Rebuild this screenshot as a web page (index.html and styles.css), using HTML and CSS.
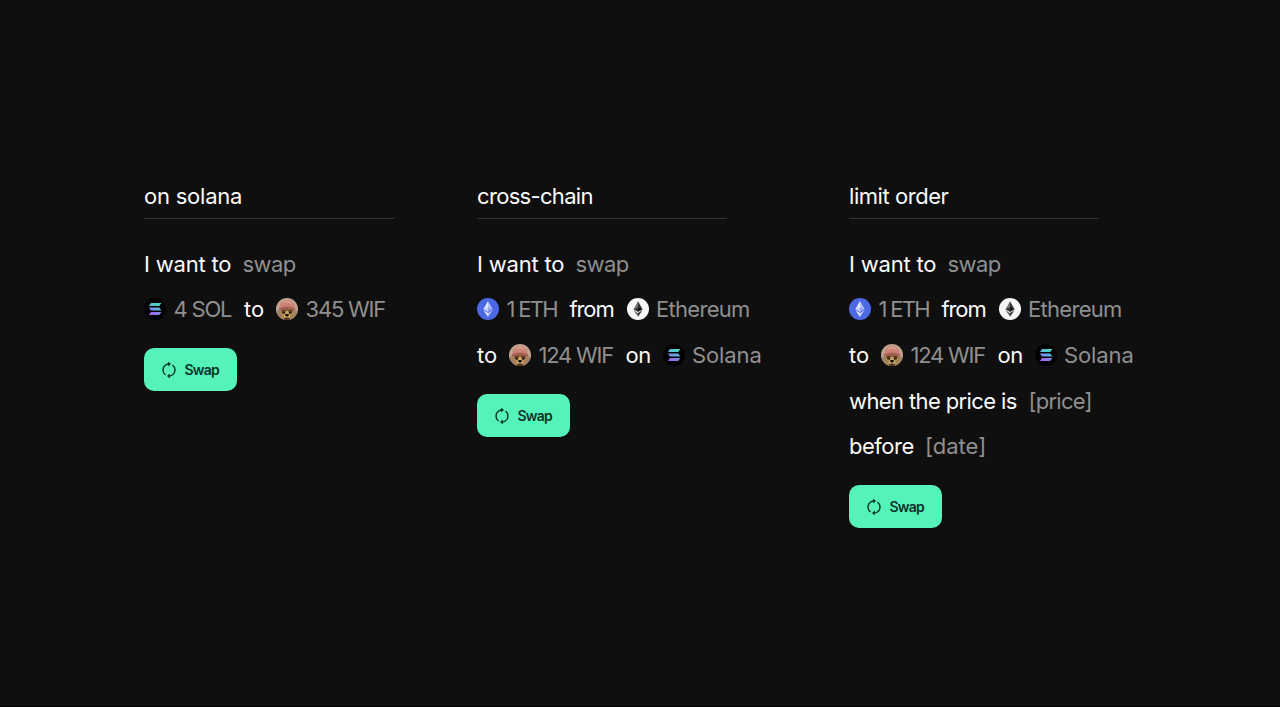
FILE: index.html
```
<!DOCTYPE html>
<html lang="en">
<head>
<meta charset="utf-8">
<title>Swap</title>
<link rel="stylesheet" href="styles.css">
</head>
<body>
<svg class="defs" aria-hidden="true">
  <defs>
    <linearGradient id="solTop"><stop offset="0" stop-color="#65b5dd"/><stop offset="1" stop-color="#40dfba"/></linearGradient>
    <linearGradient id="solMid"><stop offset="0" stop-color="#8583ea"/><stop offset="1" stop-color="#57bbd5"/></linearGradient>
    <linearGradient id="solLow"><stop offset="0" stop-color="#a55cf0"/><stop offset="1" stop-color="#7d8de8"/></linearGradient>
    <clipPath id="round"><circle cx="11" cy="11" r="11"/></clipPath>
  </defs>
  <symbol id="sol" viewBox="0 0 22 22">
    <circle cx="11" cy="11" r="11" fill="#020204"/>
    <path d="M7 5H17.4L15.2 8H4.8Z" fill="url(#solTop)"/>
    <path d="M4.8 9.5H15.2L17.4 12.5H7Z" fill="url(#solMid)"/>
    <path d="M7 14H17.4L15.2 17H4.8Z" fill="url(#solLow)"/>
  </symbol>
  <symbol id="eth" viewBox="0 0 22 22">
    <circle cx="11" cy="11" r="11" fill="#4d68e4"/>
    <path d="M11 3L6.4 11.2L11 13.8Z" fill="#e3e8ff"/>
    <path d="M11 3L15.6 11.2L11 13.8Z" fill="#b9c5fa"/>
    <path d="M11 9.2L6.4 11.2L11 13.8Z" fill="#c3ccfb"/>
    <path d="M11 9.2L15.6 11.2L11 13.8Z" fill="#8fa1f1"/>
    <path d="M6.4 12.3L11 15L11 19Z" fill="#e3e8ff"/>
    <path d="M15.6 12.3L11 15L11 19Z" fill="#b9c5fa"/>
  </symbol>
  <symbol id="ethereum" viewBox="0 0 22 22">
    <circle cx="11" cy="11" r="11" fill="#f7f7f7"/>
    <path d="M11 3.2L6.5 11.2L11 13.8Z" fill="#737373"/>
    <path d="M11 3.2L15.5 11.2L11 13.8Z" fill="#343434"/>
    <path d="M11 9.2L6.5 11.2L11 13.8Z" fill="#393939"/>
    <path d="M11 9.2L15.5 11.2L11 13.8Z" fill="#171717"/>
    <path d="M6.5 12.3L11 15L11 18.8Z" fill="#737373"/>
    <path d="M15.5 12.3L11 15L11 18.8Z" fill="#343434"/>
  </symbol>
  <symbol id="wif" viewBox="0 0 22 22">
    <g clip-path="url(#round)">
      <path d="M0 0H22V22H0Z" fill="#bfa28e"/>
      <path d="M0 13H5L6 22H0ZM17 13H22V22H16Z" fill="#a08068"/>
      <path d="M5 11H17L18 16L15.5 22H6.5L4 16Z" fill="#a98350"/>
      <path d="M3.5 11C3.5 5.5 6.4 2.2 11 2.2S18.8 5.5 18.8 11Q11 8.5 3.5 11Z" fill="#cb8176"/>
      <path d="M7 5Q11 2 15 5.2" stroke="#dda293" stroke-width="1.5" fill="none"/>
      <path d="M2.8 10.6Q11 6.3 19.2 10.6V12.8Q11 9.7 2.8 12.8Z" fill="#a55e52"/>
      <path d="M5 12.6Q11 10.2 17 12.6L16 13.8H6Z" fill="#57381f"/>
      <path d="M6 13.4L9.3 14.2L8.7 15.7L6.5 15.2ZM16 13.4L12.7 14.2L13.3 15.7L15.5 15.2Z" fill="#22180f"/>
      <path d="M9.8 12.5H12.2L12.8 16H9.2Z" fill="#cda564"/>
      <path d="M7.5 16.3Q11 14.5 14.5 16.3L14 20H8Z" fill="#c7a366"/>
      <path d="M9.1 16H12.9L12.5 18L11 18.8L9.5 18Z" fill="#17110d"/>
      <path d="M8 20.2Q11 19 14 20.2V22H8Z" fill="#493323"/>
    </g>
  </symbol>
  <symbol id="cycle" viewBox="0 0 16 16">
    <path d="M4.6 13A6.1 6.1 0 0 1 4.6 3Q6 2 8 2M11.4 3A6.1 6.1 0 0 1 11.4 13Q10 14 8 14" fill="none" stroke="#0c3427" stroke-width="1.45"/>
    <path d="M7.2 -.5L10 2L7.2 4.5ZM8.8 11.5L6 14L8.8 16.5Z" fill="#0c3427"/>
  </symbol>
</svg>
<main class="page">
  <section class="column solana">
    <h2 class="title"><span class="t-solana">on solana</span></h2>
    <div class="line"><span class="w-want">I want to</span><span class="w-swap dim">swap</span></div>
    <div class="line"><span class="token"><svg class="coin"><use href="#sol"/></svg><span class="w-4sol dim">4 SOL</span></span><span class="w-to">to</span><span class="token"><svg class="coin"><use href="#wif"/></svg><span class="w-345 dim">345 WIF</span></span></div>
    <button class="button"><svg class="cycle"><use href="#cycle"/></svg><span>Swap</span></button>
  </section>
  <section class="column cross">
    <h2 class="title"><span class="t-cross">cross-chain</span></h2>
    <div class="line"><span class="w-want">I want to</span><span class="w-swap dim">swap</span></div>
    <div class="line"><span class="token"><svg class="coin"><use href="#eth"/></svg><span class="w-eth dim">1 ETH</span></span><span class="w-from">from</span><span class="token"><svg class="coin"><use href="#ethereum"/></svg><span class="w-ethereum dim">Ethereum</span></span></div>
    <div class="line"><span class="w-to">to</span><span class="token"><svg class="coin"><use href="#wif"/></svg><span class="w-124 dim">124 WIF</span></span><span class="w-on">on</span><span class="token"><svg class="coin"><use href="#sol"/></svg><span class="w-sol dim">Solana</span></span></div>
    <button class="button"><svg class="cycle"><use href="#cycle"/></svg><span>Swap</span></button>
  </section>
  <section class="column limit">
    <h2 class="title"><span class="t-limit">limit order</span></h2>
    <div class="line"><span class="w-want">I want to</span><span class="w-swap dim">swap</span></div>
    <div class="line"><span class="token"><svg class="coin"><use href="#eth"/></svg><span class="w-eth dim">1 ETH</span></span><span class="w-from">from</span><span class="token"><svg class="coin"><use href="#ethereum"/></svg><span class="w-ethereum dim">Ethereum</span></span></div>
    <div class="line"><span class="w-to">to</span><span class="token"><svg class="coin"><use href="#wif"/></svg><span class="w-124 dim">124 WIF</span></span><span class="w-on">on</span><span class="token"><svg class="coin"><use href="#sol"/></svg><span class="w-sol dim">Solana</span></span></div>
    <div class="line"><span class="w-when">when the price is</span><span class="w-price dim">[price]</span></div>
    <div class="line"><span class="w-before">before</span><span class="w-date dim">[date]</span></div>
    <button class="button"><svg class="cycle"><use href="#cycle"/></svg><span>Swap</span></button>
  </section>
</main>
</body>
</html>
```
FILE: styles.css
```
* { box-sizing: border-box; }
body {
  margin: 0;
  background: #0f0f0f;
  color: #fafafa;
  font-family: Inter, "Liberation Sans", sans-serif;
  font-size: 22px;
}
.defs { position: absolute; width: 0; height: 0; }
.page {
  display: grid;
  grid-template-columns: 333px 372px 300px;
  align-items: start;
  height: 707px;
  padding: 180px 0 0 144px;
  border-bottom: 1px solid #000;
}
.title {
  width: 250px;
  height: 39px;
  margin: 0 0 22px;
  border-bottom: 1px solid #343434;
  font-size: 22px;
  font-weight: 400;
  line-height: 33px;
  white-space: nowrap;
}
.t-solana { letter-spacing: -.22px; }
.t-cross { letter-spacing: -.68px; }
.t-limit { letter-spacing: -.45px; }
.line {
  display: flex;
  align-items: center;
  gap: 12px;
  height: 45.6px;
  white-space: nowrap;
}
.line span { flex: none; }
.token { display: flex; align-items: center; gap: 7.5px; }
.coin { width: 22px; height: 22px; flex: none; }
.dim { color: #8f8f8f; }
.w-want { width: 86.5px; letter-spacing: -.2px; }
.w-swap { width: 53px; letter-spacing: -.6px; }
.w-4sol { width: 58.5px; letter-spacing: -1.2px; }
.w-to { width: 20px; }
.w-345 { width: 80px; letter-spacing: -1.2px; }
.w-eth { width: 51px; letter-spacing: -1.7px; }
.w-from { width: 45px; letter-spacing: -1.1px; }
.w-ethereum { width: 94px; letter-spacing: -.7px; }
.w-124 { width: 75px; letter-spacing: -1.2px; }
.w-on { width: 25px; letter-spacing: -.5px; }
.w-sol { width: 70px; letter-spacing: -.1px; }
.w-when { width: 167.5px; letter-spacing: -.62px; }
.w-price { letter-spacing: -.75px; }
.w-before { width: 64px; letter-spacing: -.5px; }
.button {
  display: flex;
  align-items: center;
  width: 92.5px;
  height: 43px;
  margin-top: 16.3px;
  padding: 0 0 0 16.5px;
  gap: 8px;
  border: 0;
  border-radius: 10px;
  background: #55f3b9;
  color: #0c3427;
  font: 600 14px Inter, sans-serif;
  letter-spacing: -.75px;
}
.cycle { width: 16px; height: 16px; flex: none; overflow: visible; }
```
